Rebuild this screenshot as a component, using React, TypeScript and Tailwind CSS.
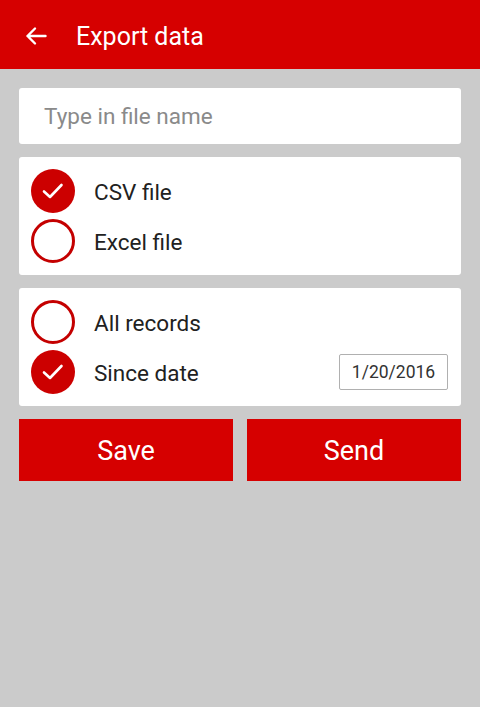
import React from "react";

const font = { fontFamily: "Roboto, 'Noto Sans', sans-serif" };

function Check({ checked }: { checked: boolean }) {
  if (checked) {
    return (
      <div className="w-[44px] h-[44px] rounded-full bg-[#cc0000] flex items-center justify-center shrink-0">
        <svg width="28" height="28" viewBox="0 0 28 28">
          <path d="M5 14.5 L11 20 L22.5 8" fill="none" stroke="#ffffff" strokeWidth="2.6" strokeLinecap="round" strokeLinejoin="round" />
        </svg>
      </div>
    );
  }
  return <div className="w-[44px] h-[44px] rounded-full border-[3px] border-[#c40000] bg-white shrink-0" />;
}

function Row({ checked, label, right }: { checked: boolean; label: string; right?: React.ReactNode }) {
  return (
    <div className="h-[50px] flex items-center pl-[12px] pr-[13px]">
      <Check checked={checked} />
      <span className="ml-[19px] text-[22.5px] leading-none pt-[2px] text-[#212121] flex-1">{label}</span>
      {right}
    </div>
  );
}

export default function App() {
  return (
    <div className="w-[480px] h-[707px] bg-[#cbcbcb] flex flex-col" style={font}>
      <div className="h-[69px] bg-[#d60000] flex items-center shrink-0">
        <svg width="22" height="20" viewBox="0 0 22 20" className="ml-[25px] mt-[2px]">
          <path d="M20.5 10 H2.5 M10 2.5 L2.5 10 L10 17.5" fill="none" stroke="#ffffff" strokeWidth="2.4" strokeLinecap="round" strokeLinejoin="round" />
        </svg>
        <span className="ml-[29px] text-[25px] leading-none pt-[3px] text-white">Export data</span>
      </div>
      <div className="flex flex-col gap-[13px] px-[19px] pt-[19px]">
        <div className="h-[56px] bg-white rounded-[3px] flex items-center pl-[25px]">
          <span className="text-[22.5px] leading-none pt-[1px] text-[#8a8a8a]">Type in file name</span>
        </div>
        <div className="bg-white rounded-[3px] py-[9px]">
          <Row checked label="CSV file" />
          <Row checked={false} label="Excel file" />
        </div>
        <div className="bg-white rounded-[3px] py-[9px]">
          <Row checked={false} label="All records" />
          <Row
            checked
            label="Since date"
            right={
              <div className="w-[109px] h-[36px] border border-[#b0b0b0] rounded-[2px] flex items-center justify-center text-[17.5px] text-[#333333]">
                1/20/2016
              </div>
            }
          />
        </div>
        <div className="flex gap-[14px]">
          <div className="flex-1 h-[62px] bg-[#d60000] flex items-center justify-center pt-[3px] text-white text-[27px]">Save</div>
          <div className="flex-1 h-[62px] bg-[#d60000] flex items-center justify-center pt-[3px] text-white text-[27px]">Send</div>
        </div>
      </div>
    </div>
  );
}
